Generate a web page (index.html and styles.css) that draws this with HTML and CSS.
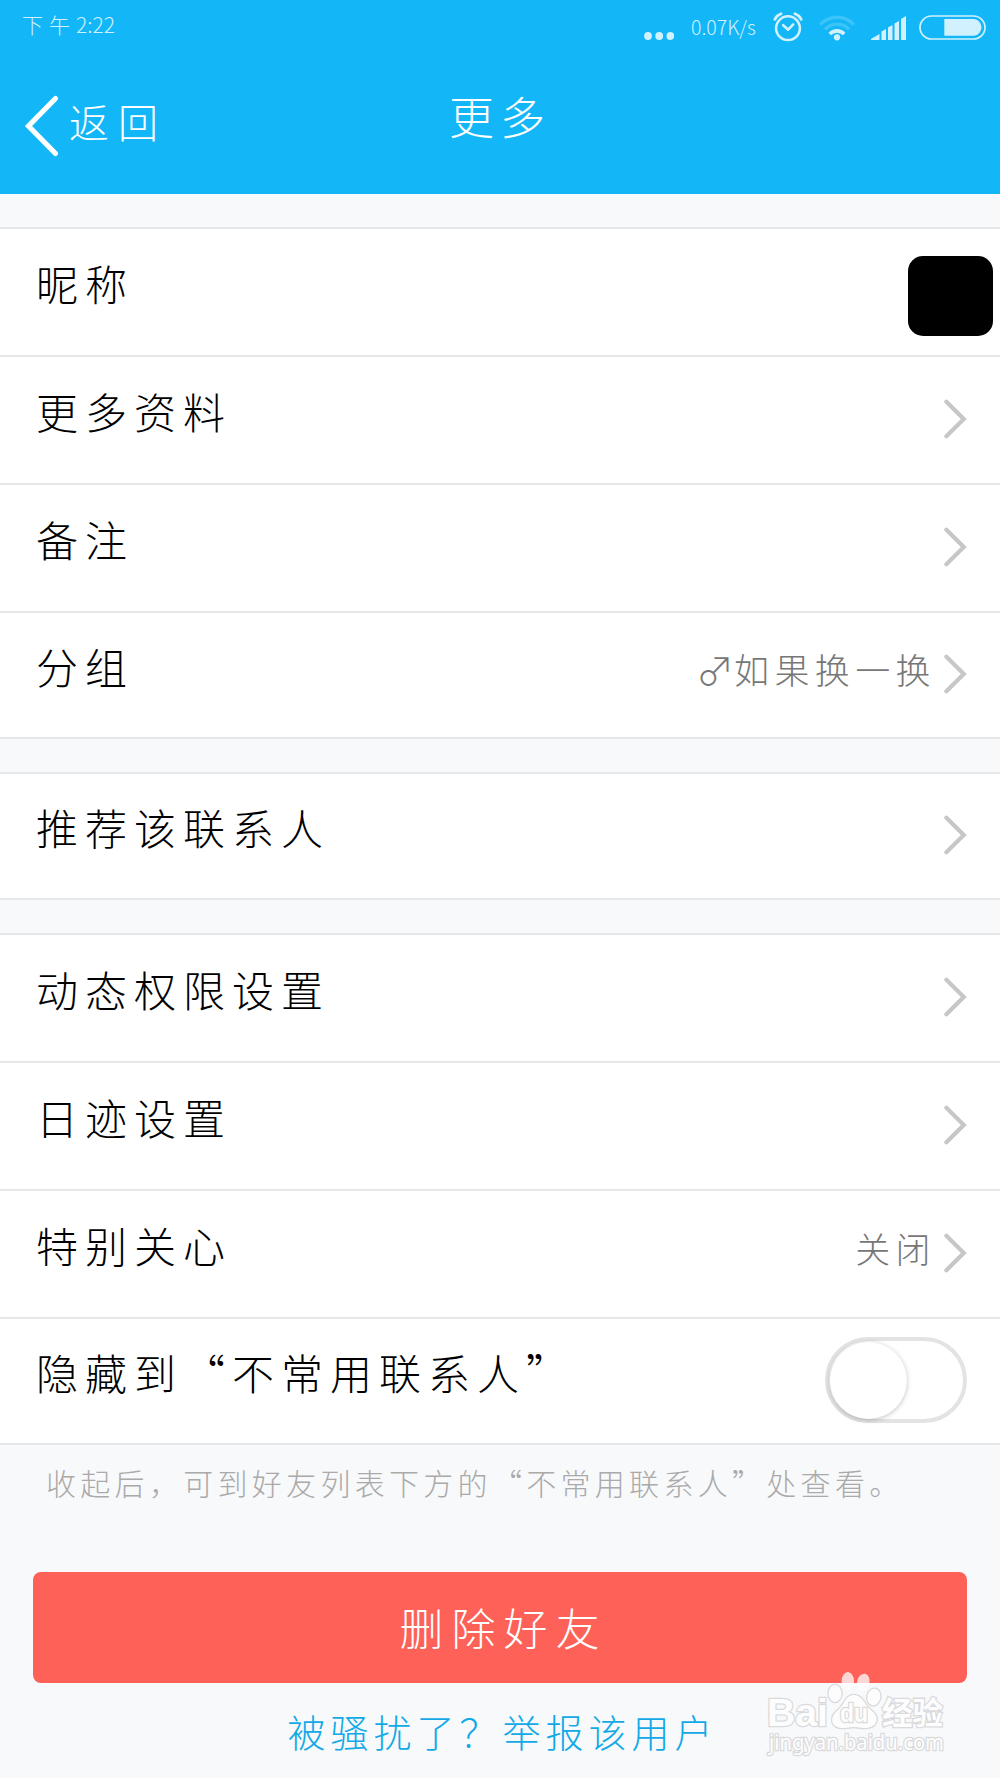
FILE: index.html
```html
<!DOCTYPE html>
<html lang="zh-CN">
<head>
<meta charset="utf-8">
<title>更多</title>
<link rel="stylesheet" href="styles.css">
</head>
<body>
<svg class="defs" width="0" height="0">
  <symbol id="chevron" viewBox="0 0 24 40"><path d="M3.4 2.8 L20.8 20 L3.4 37.2" fill="none" stroke="#c7c7c7" stroke-width="4.2" stroke-linecap="round" stroke-linejoin="miter"/></symbol>
</svg>
<div class="screen">
  <header class="header">
    <div class="status">
      <div class="time"><span class="ampm">下午</span>2:22</div>
      <div class="indicators">
        <svg class="dots" width="30" height="8" viewBox="0 0 30 8"><g fill="#d0f1fd"><circle cx="4" cy="4" r="3.9"/><circle cx="15.2" cy="4" r="3.9"/><circle cx="26.4" cy="4" r="3.9"/></g></svg>
        <span class="speed">0.07K/s</span>
        <svg class="alarm" width="30" height="30" viewBox="0 0 30 30"><g fill="none" stroke="#d0f1fd" stroke-linecap="round"><circle cx="15" cy="16.2" r="11.9" stroke-width="2.5"/><path d="M10.2 13.2 L15.2 17.7 L20.2 12.4" stroke-width="2.6" stroke-linejoin="round"/><path d="M1.8 7.3 Q3.5 3.6 8 1.8 M28.2 7.3 Q26.5 3.6 22 1.8" stroke-width="2.8"/></g></svg>
        <svg class="wifi" width="36" height="26" viewBox="0 0 36 26"><g fill="none" stroke="#d0f1fd" stroke-width="3.4"><path d="M1.3 9.7 A22.5 22.5 0 0 1 34.7 9.7" opacity=".22"/><path d="M5.9 14.4 A16.5 16.5 0 0 1 30.1 14.4" opacity=".22"/><path d="M10.8 18.9 A10 10 0 0 1 25.2 18.9" stroke-width="3.6"/></g><circle cx="18" cy="22.3" r="3.1" fill="#d0f1fd"/></svg>
        <svg class="signal" width="35" height="24" viewBox="0 0 35 24"><g fill="#d0f1fd"><path d="M0 24 V23 L8.5 18 V24Z"/><path d="M10.5 24 V15.5 L15 13 V24Z"/><path d="M17 24 V11.5 L21.5 9 V24Z"/><path d="M23.5 24 V7.5 L28 5 V24Z"/><path d="M30 24 V3 L35 0 V24Z"/></g></svg>
        <svg class="battery" width="67" height="25" viewBox="0 0 67 25"><rect x="1" y="1" width="65" height="23" rx="11.5" fill="none" stroke="#d0f1fd" stroke-width="1.7"/><path d="M25.3 4 H55 A8.4 8.4 0 0 1 55 20.7 H25.3Z" fill="#d0f1fd"/></svg>
      </div>
    </div>
    <nav class="nav">
      <a class="back"><svg width="36" height="64" viewBox="0 0 36 64"><path d="M31.5 4.5 L4.5 32 L31.5 59.5" fill="none" stroke="#fff" stroke-width="5.2" stroke-linecap="round"/></svg><span class="back-label">返回</span></a>
      <h1 class="title">更多</h1>
    </nav>
  </header>

  <section class="group">
    <div class="row nickname"><span class="label">昵称</span><span class="masked"></span></div>
    <div class="row"><span class="label">更多资料</span><svg class="chevron"><use href="#chevron"/></svg></div>
    <div class="row"><span class="label">备注</span><svg class="chevron"><use href="#chevron"/></svg></div>
    <div class="row"><span class="label">分组</span><span class="value"><span class="male">♂</span>如果换一换</span><svg class="chevron"><use href="#chevron"/></svg></div>
  </section>

  <section class="group">
    <div class="row"><span class="label">推荐该联系人</span><svg class="chevron"><use href="#chevron"/></svg></div>
  </section>

  <section class="group">
    <div class="row"><span class="label">动态权限设置</span><svg class="chevron"><use href="#chevron"/></svg></div>
    <div class="row"><span class="label">日迹设置</span><svg class="chevron"><use href="#chevron"/></svg></div>
    <div class="row"><span class="label">特别关心</span><span class="value">关闭</span><svg class="chevron"><use href="#chevron"/></svg></div>
    <div class="row"><span class="label">隐藏到“不常用联系人”</span><span class="toggle"><span class="knob"></span></span></div>
  </section>

  <p class="hint">收起后，可到好友列表下方的“不常用联系人”处查看。</p>
  <button class="delete">删除好友</button>
  <a class="report">被骚扰了？举报该用户</a>

  <svg class="watermark" width="200" height="100" viewBox="0 0 200 100">
    <g fill="#fff" stroke="#d0d0d2" stroke-width="2.6" paint-order="stroke" opacity=".75">
      <ellipse cx="75" cy="23.5" rx="6.5" ry="8.5"/>
      <ellipse cx="87.8" cy="11" rx="6.2" ry="9" stroke="none"/>
      <ellipse cx="103.3" cy="12.3" rx="6.2" ry="8.7" transform="rotate(12 103.3 12.3)" stroke="none"/>
      <ellipse cx="113.8" cy="27" rx="6.5" ry="8.3" transform="rotate(12 113.8 27)"/>
      <path d="M94 25 C103 25 104 35 112 41 C121 49 116 58 105 58 C99 58 97 57 94 57 C90 57 88 58 83 58 C71 58 69 48 77 41 C85 35 85 25 94 25Z"/>
      <text class="wm-bai" x="7" y="56" textLength="61" lengthAdjust="spacingAndGlyphs">Bai</text>
      <text class="wm-du" x="80" y="52" textLength="28" lengthAdjust="spacingAndGlyphs">du</text>
      <text class="wm-cjk" x="122" y="54" textLength="61" lengthAdjust="spacingAndGlyphs">经验</text>
      <text class="wm-url" x="9" y="80" textLength="175" lengthAdjust="spacingAndGlyphs">jingyan.baidu.com</text>
    </g>
  </svg>
</div>
</body>
</html>
```
FILE: styles.css
```css
* { box-sizing: border-box; }
body { margin: 0; background: #f8f9fb; }
.defs { position: absolute; }
.screen {
  position: relative;
  width: 1000px;
  height: 1778px;
  overflow: hidden;
  font-family: "Noto Sans CJK SC", sans-serif;
  font-weight: 300;
  color: #000;
  background: #f8f9fb;
}
.header { height: 194px; background: #13b7f7; color: #fff; margin-bottom: 33px; }
.status {
  display: flex;
  justify-content: space-between;
  height: 56px;
  padding: 0 14px 0 22px;
  color: #d0f1fd;
}
.time { font-size: 21px; line-height: 48px; }
.ampm { letter-spacing: 6px; }
.indicators { display: flex; align-items: flex-start; }
.speed { width: 65px; margin: 0 17px; font-size: 19.5px; line-height: 54px; white-space: nowrap; }
.dots { margin-top: 32px; }
.alarm { margin-top: 12px; }
.wifi { margin: 15px 16px 0; }
.signal { margin-top: 16px; margin-right: 13px; }
.battery { margin-top: 15px; }

.nav { display: grid; grid-template-columns: 1fr auto 1fr; height: 138px; }
.back { display: flex; align-items: flex-start; padding: 38px 0 0 24px; }
.back-label { margin-left: 9px; font-size: 40px; line-height: 55px; letter-spacing: 9px; }
.title { margin: 0; font-size: 45px; font-weight: 300; line-height: 119px; letter-spacing: 6px; }

.group { margin-bottom: 33px; border-top: 2px solid #e6e7e8; background: #fff; }
.row {
  display: flex;
  align-items: center;
  height: 128px;
  padding: 0 33px 2px 36px;
  border-bottom: 2px solid #e6e7e8;
}
.row:last-child { height: 126px; }
.label { flex: 1; margin-top: -16px; font-size: 42px; line-height: 60px; letter-spacing: 7px; }
.nickname { padding-right: 7px; }
.masked { width: 85px; height: 80px; margin-top: 9px; border-radius: 15px; background: #000; }
.chevron { width: 24px; height: 40px; }
.value {
  display: flex;
  align-items: center;
  margin-top: -11px;
  margin-right: 7px;
  font-size: 35px;
  line-height: 50px;
  letter-spacing: 5.4px;
  color: #777;
}
.male { font-size: 38px; letter-spacing: 0; }
.toggle {
  width: 142px;
  height: 86px;
  padding: 1px;
  border: 4px solid #e3e3e3;
  border-radius: 43px;
  background: #fff;
}
.knob {
  display: block;
  width: 77px;
  height: 77px;
  border-radius: 50%;
  background: #fff;
  box-shadow: 0 1px 5px rgba(0, 0, 0, .25);
}

.hint {
  margin: -33px 0 0;
  padding: 12px 0 0 46px;
  height: 127px;
  font-size: 30px;
  line-height: 50px;
  letter-spacing: 4.3px;
  color: #aaa;
}
.delete {
  display: block;
  width: 934px;
  height: 111px;
  margin: 0 33px;
  padding: 0 0 2px 7px;
  border: 0;
  border-radius: 8px;
  background: #fd6157;
  color: #fff;
  font-family: inherit;
  font-weight: 300;
  font-size: 44px;
  letter-spacing: 8px;
}
.report {
  display: block;
  padding-left: 5px;
  font-size: 38px;
  line-height: 96px;
  letter-spacing: 5px;
  text-align: center;
  color: #12a9e6;
}
.watermark { position: absolute; left: 760px; top: 1670px; }
.wm-bai { font: 700 39px "Liberation Sans", sans-serif; }
.wm-du { font: 700 25px "Liberation Sans", sans-serif; }
.wm-cjk { font: 700 31px "Noto Sans CJK SC", sans-serif; }
.wm-url { font: 400 21px "Noto Sans", sans-serif; }
```
